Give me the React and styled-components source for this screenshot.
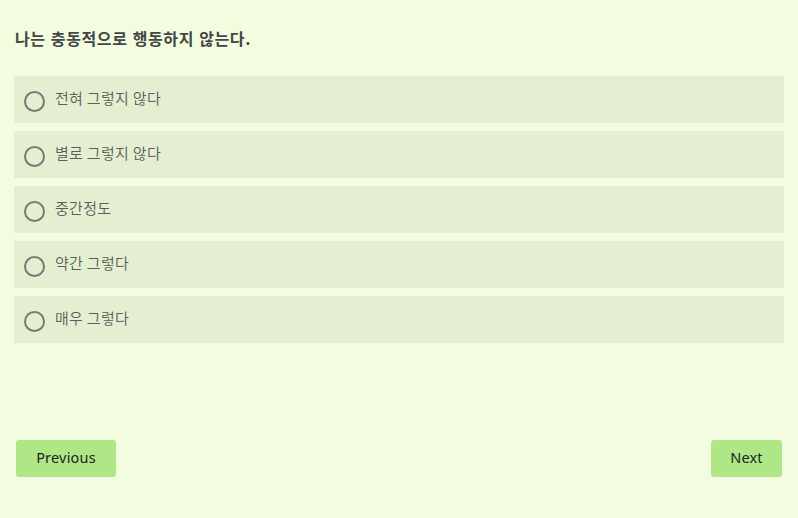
import React, { useState } from "react";
import styled, { createGlobalStyle } from "styled-components";

const GlobalStyle = createGlobalStyle`
  html, body {
    margin: 0;
    padding: 0;
    background: #f2fde0;
  }
  body {
    font-family: "Noto Sans", "Noto Sans CJK KR", sans-serif;
  }
`;

const Page = styled.div`
  box-sizing: border-box;
  width: 798px;
  height: 518px;
  padding: 27px 14px 0;
  display: flex;
  flex-direction: column;
`;

const Question = styled.h2`
  margin: 0 0 27px 1px;
  font-size: 16px;
  font-weight: 700;
  letter-spacing: 0.6px;
  word-spacing: 1px;
  line-height: 22px;
  color: #454545;
  font-family: "Noto Sans CJK KR", "Noto Sans", sans-serif;
`;

const OptionList = styled.div`
  display: flex;
  flex-direction: column;
  gap: 8px;
`;

const Option = styled.label`
  box-sizing: border-box;
  height: 47px;
  padding: 0 0 0 10px;
  display: flex;
  align-items: center;
  gap: 10px;
  background: ${(p) => (p.$selected ? "#d6eabb" : "#e3efd0")};
  cursor: pointer;
`;

const Radio = styled.span`
  box-sizing: border-box;
  width: 21px;
  height: 21px;
  margin-top: 4px;
  border-radius: 50%;
  border: 2px solid #787878;
  display: flex;
  align-items: center;
  justify-content: center;
  flex-shrink: 0;

  &::after {
    content: "";
    width: 11px;
    height: 11px;
    border-radius: 50%;
    background: ${(p) => (p.$checked ? "#787878" : "transparent")};
  }
`;

const OptionText = styled.span`
  font-size: 15px;
  font-weight: 350;
  letter-spacing: 0.3px;
  color: #5c5c5c;
  font-family: "Noto Sans CJK KR", "Noto Sans", sans-serif;
  margin-top: -4px;
`;

const Footer = styled.div`
  margin-top: 97px;
  padding: 0 2px;
  display: flex;
  justify-content: space-between;
`;

const NavButton = styled.button`
  box-sizing: border-box;
  width: ${(p) => p.$w}px;
  height: 37px;
  padding: 0 0 3px;
  border: none;
  border-radius: 3px;
  background: #afe787;
  color: #222;
  font-family: "Noto Sans", sans-serif;
  font-size: 14.5px;
  letter-spacing: 0.2px;
  cursor: pointer;
`;

const options = [
  "전혀 그렇지 않다",
  "별로 그렇지 않다",
  "중간정도",
  "약간 그렇다",
  "매우 그렇다",
];

export default function App() {
  const [picked, setPicked] = useState(null);

  return (
    <>
      <GlobalStyle />
      <Page>
        <Question>나는 충동적으로 행동하지 않는다.</Question>
        <OptionList>
          {options.map((text, i) => (
            <Option key={text} $selected={picked === i} onClick={() => setPicked(i)}>
              <Radio $checked={picked === i} />
              <OptionText>{text}</OptionText>
            </Option>
          ))}
        </OptionList>
        <Footer>
          <NavButton $w={100}>Previous</NavButton>
          <NavButton $w={71}>Next</NavButton>
        </Footer>
      </Page>
    </>
  );
}
